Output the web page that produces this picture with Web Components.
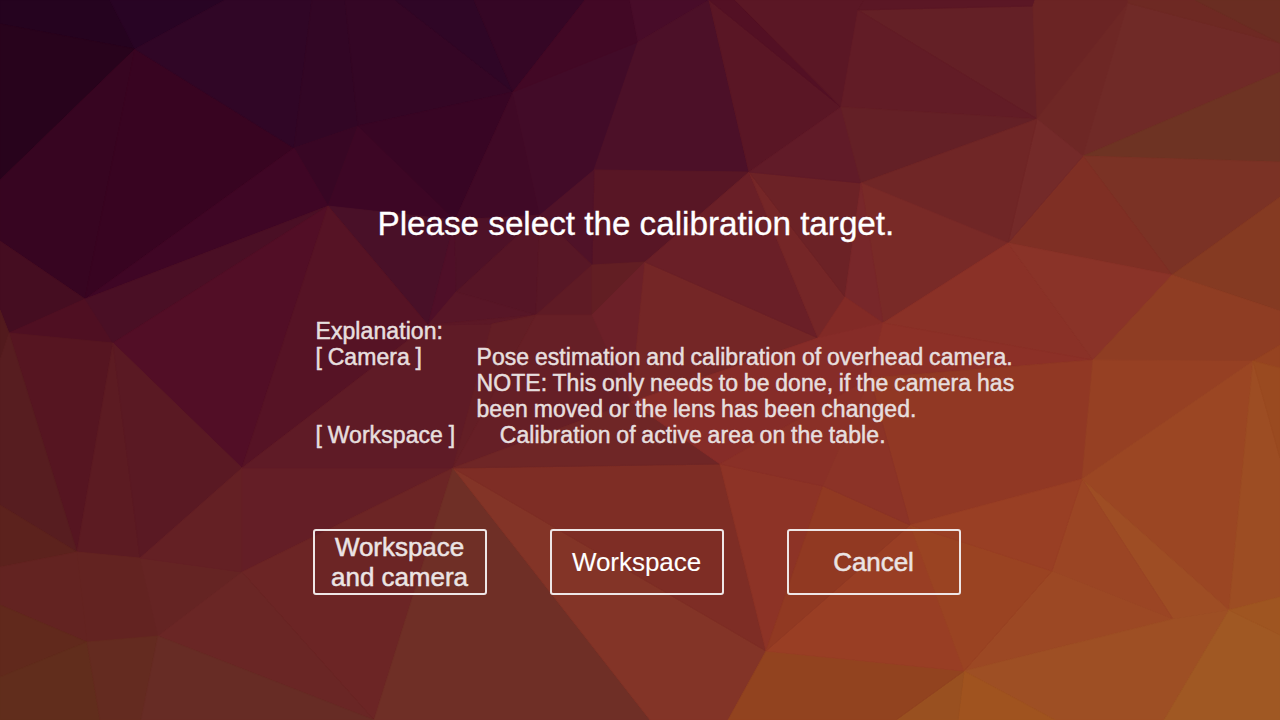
<!DOCTYPE html>
<html lang="en">
<head>
<meta charset="utf-8">
<title>Calibration</title>
<style>html,body{margin:0;height:100%;overflow:hidden;background:#5c1b24}</style>
</head>
<body>
<calibration-screen></calibration-screen>
<script>
class PolyBackdrop extends HTMLElement {
  connectedCallback() {
    const V = {A:'135,49',B:'0,180',C:'85,299',D:'9,333',E:'113,343',F:'328,206',G:'294,148',H:'358,126',I:'513,92',K:'638,42',L:'594,170',M:'749,172',N:'709,0',O:'841,107',P:'858,10',Q:'1033,6',R:'1037,119',S:'1083,156',T:'1128,3',U:'861,183',W:'1172,275',V:'1008,243',X:'883,323',Y:'845,297',Z:'818,338',
      a:'645,262',b:'592,265',B2:'592,315',c:'536,315',d:'456,292',e:'428,325',z:'492,324',y:'455,220',x:'540,215',f:'242,468',g:'77,552',h:'140,558',i:'242,572',j:'158,636',k:'87,642',l:'453,468',m:'720,464',n:'766,651',o:'910,525',p:'823,486',q:'1082,479',r:'1253,361',s:'1229,610',t:'1173,619',u:'1052,571',v:'964,671',w:'631,402',G2:'870,378',J:'1093,360',TR:'1280,0',BR:'1280,720'};
    const faces = `0,0 110,0 A 0,24|25031f
110,0 A 225,0|280424
0,24 A B|28031c
A B 0,241 C|370521
A G C|380421
225,0 A G 312,0|300626
312,0 G H 345,0|320625
345,0 H I 395,0|340625
395,0 I 474,0|2f0626
474,0 I 585,0|350625
G H F|380624
C G F|3f0625
H F y|3d0625
H I y|380524
I y x|400926
I K L x|420b28
585,0 I K 630,0|420825
630,0 K N|480c29
K L M N|4c1028
L M a b|581625
L b x|501228
F y e|491028
0,241 C D 0,310|450d21
C D E|4f0f22
C F E|4a0f25
E F f|520e26
F f e|561325
D E g|561521
0,310 D 0,360|521a1d
0,360 D g 0,505|571d20
E g h|5c1b22
E h f|5a1923
0,505 g 0,567|5c221d
0,567 g k 0,605|632321
g h j k|632321
h i j|652423
h f i|642024
f i l|641e26
f e z l|5f1b26
i l 374,720|6c2525
i j 374,720|6a2625
0,605 k 0,677|61291c
k 0,677 0,720 100,720|612d1c
k j 141,720 100,720|642b20
j 141,720 374,720|672c25
l 374,720 650,720|6f2f26
l 650,720 728,720 n|833427
l m n|7e2d25
y d e|4f0f28
y x d|4e1127
x d c|561526
x c b|581726
b c B2|5f1b25
b a B2|621e23
d e c|581627
e c z|5c1826
z c l|631e25
c B2 w l|661f26
l w m|6f2626
a B2 w|6c2028
a w Z|742626
a M Z|6a1f27
M Y Z|752627
M U Y|6c2226
N M O|5a1625
N O 735,0|531024
735,0 O P 864,0|5b1725
O M U|611b28
P Q R|642026
P O R|621c26
O U R|642026
864,0 P Q 1035,0|5b1725
1035,0 Q R T 1130,0|6b2424
T R S|6e2725
T S 1280,72 1280,43|702a27
1128,0 T 1280,43 1195,0|6e2923
1195,0 TR 1280,43|6a2d22
S 1280,72 1280,162|6e3323
S 1280,162 1280,197 W|7b3225
S V W|7f2f24
R S V|742a29
U R V|702626
U V X|792a27
U X Y|78272a
Y Z X|822a26
Z X G2 m w|862c28
V X J|8a3127
V J W|8a3328
W 1280,197 1280,311|853a22
W 1280,311 1280,345 r J|8f3d23
1280,345 r 1280,368|964321
X J G2|8c3027
G2 J q o|913824
J r q|964023
q r s|9b4623
r s 1280,597 1280,458|9d4d23
r 1280,368 1280,458|9a4a20
q s t|9e4d24
q t u|9b4524
t u v|9c4824
v t s 1164,720 1055,720|9e4f24
s 1164,720 BR 1280,635|a05823
s 1280,597 1280,635|9f5521
v 1055,720 958,720|a0531f
v 958,720 896,720|995020
n v 896,720 728,720|92431f
n o v|993e24
o u v|9a4322
o q u|993f24
m p n|8d3326
p o n|913922
m p G2|8a3027
p o G2|8c3327`.split('\n').map(l => {
      const [pts, c] = l.split('|');
      return `<polygon points="${pts.split(' ').map(t => V[t] || t).join(' ')}" fill="#${c}" stroke="#${c}"/>`;
    }).join('');
    this.attachShadow({mode:'open'}).innerHTML = `<style>:host{display:block;width:1280px;height:720px}svg{display:block}polygon{stroke-width:.8}</style><svg width="1280" height="720" viewBox="0 0 1280 720" aria-hidden="true">${faces}</svg>`;
  }
}
customElements.define('poly-backdrop', PolyBackdrop);

class OutlineButton extends HTMLElement {
  connectedCallback() {
    this.attachShadow({mode:'open'}).innerHTML = `<style>
:host{display:block;width:174px;height:66px;--ink:#ebe4e4}
:host([selected]){--ink:#fff}
button{box-sizing:border-box;width:100%;height:100%;margin:0;padding:0 1px 0 0;background:none;border:2px solid #eee6e6;border-radius:3px;color:var(--ink);font:26px/30px "Liberation Sans",Arial,sans-serif;letter-spacing:-.05px;-webkit-text-stroke:.5px var(--ink);text-align:center;display:grid;place-items:center}
:host([selected]) button{-webkit-text-stroke-width:.1px}
</style><button><span><slot></slot></span></button>`;
  }
}
customElements.define('outline-button', OutlineButton);

class ExplanationRow extends HTMLElement {
  connectedCallback() {
    this.attachShadow({mode:'open'}).innerHTML = `<style>
:host{display:flex}
.term{flex:none;width:var(--term,161px)}
::slotted(*){display:block;white-space:nowrap}
</style><div class="term"><slot name="term"></slot></div><div><slot></slot></div>`;
  }
}
customElements.define('explanation-row', ExplanationRow);

class CalibrationScreen extends HTMLElement {
  connectedCallback() {
    this.attachShadow({mode:'open'}).innerHTML = `<style>
:host{display:grid;width:1280px;height:720px;font-family:"Liberation Sans",Arial,sans-serif}
poly-backdrop,main{grid-area:1/1}
main{z-index:1;padding:204px 0 0 313px;color:#e6dede}
h1{margin:0 0 0 64.5px;font-weight:400;font-size:33.3px;line-height:40px;letter-spacing:-.04px;color:#fff;-webkit-text-stroke:.3px #fff;white-space:nowrap}
section{margin:74px 0 0 2.5px;font-size:23px;line-height:26px;letter-spacing:.08px;word-spacing:-.8px;-webkit-text-stroke:.5px #e6dede;white-space:nowrap}
nav{display:flex;gap:63px;margin-top:81px}
</style>
<poly-backdrop></poly-backdrop>
<main>
<h1>Please select the calibration target.</h1>
<section>
<div>Explanation:</div>
<explanation-row><span slot="term">[ Camera ]</span><span>Pose estimation and calibration of overhead camera.</span><span>NOTE: This only needs to be done, if the camera has</span><span>been moved or the lens has been changed.</span></explanation-row>
<explanation-row style="--term:184.3px"><span slot="term">[ Workspace ]</span><span>Calibration of active area on the table.</span></explanation-row>
</section>
<nav><outline-button>Workspace<br>and camera</outline-button><outline-button selected>Workspace</outline-button><outline-button>Cancel</outline-button></nav>
</main>`;
  }
}
customElements.define('calibration-screen', CalibrationScreen);
</script>
</body>
</html>
